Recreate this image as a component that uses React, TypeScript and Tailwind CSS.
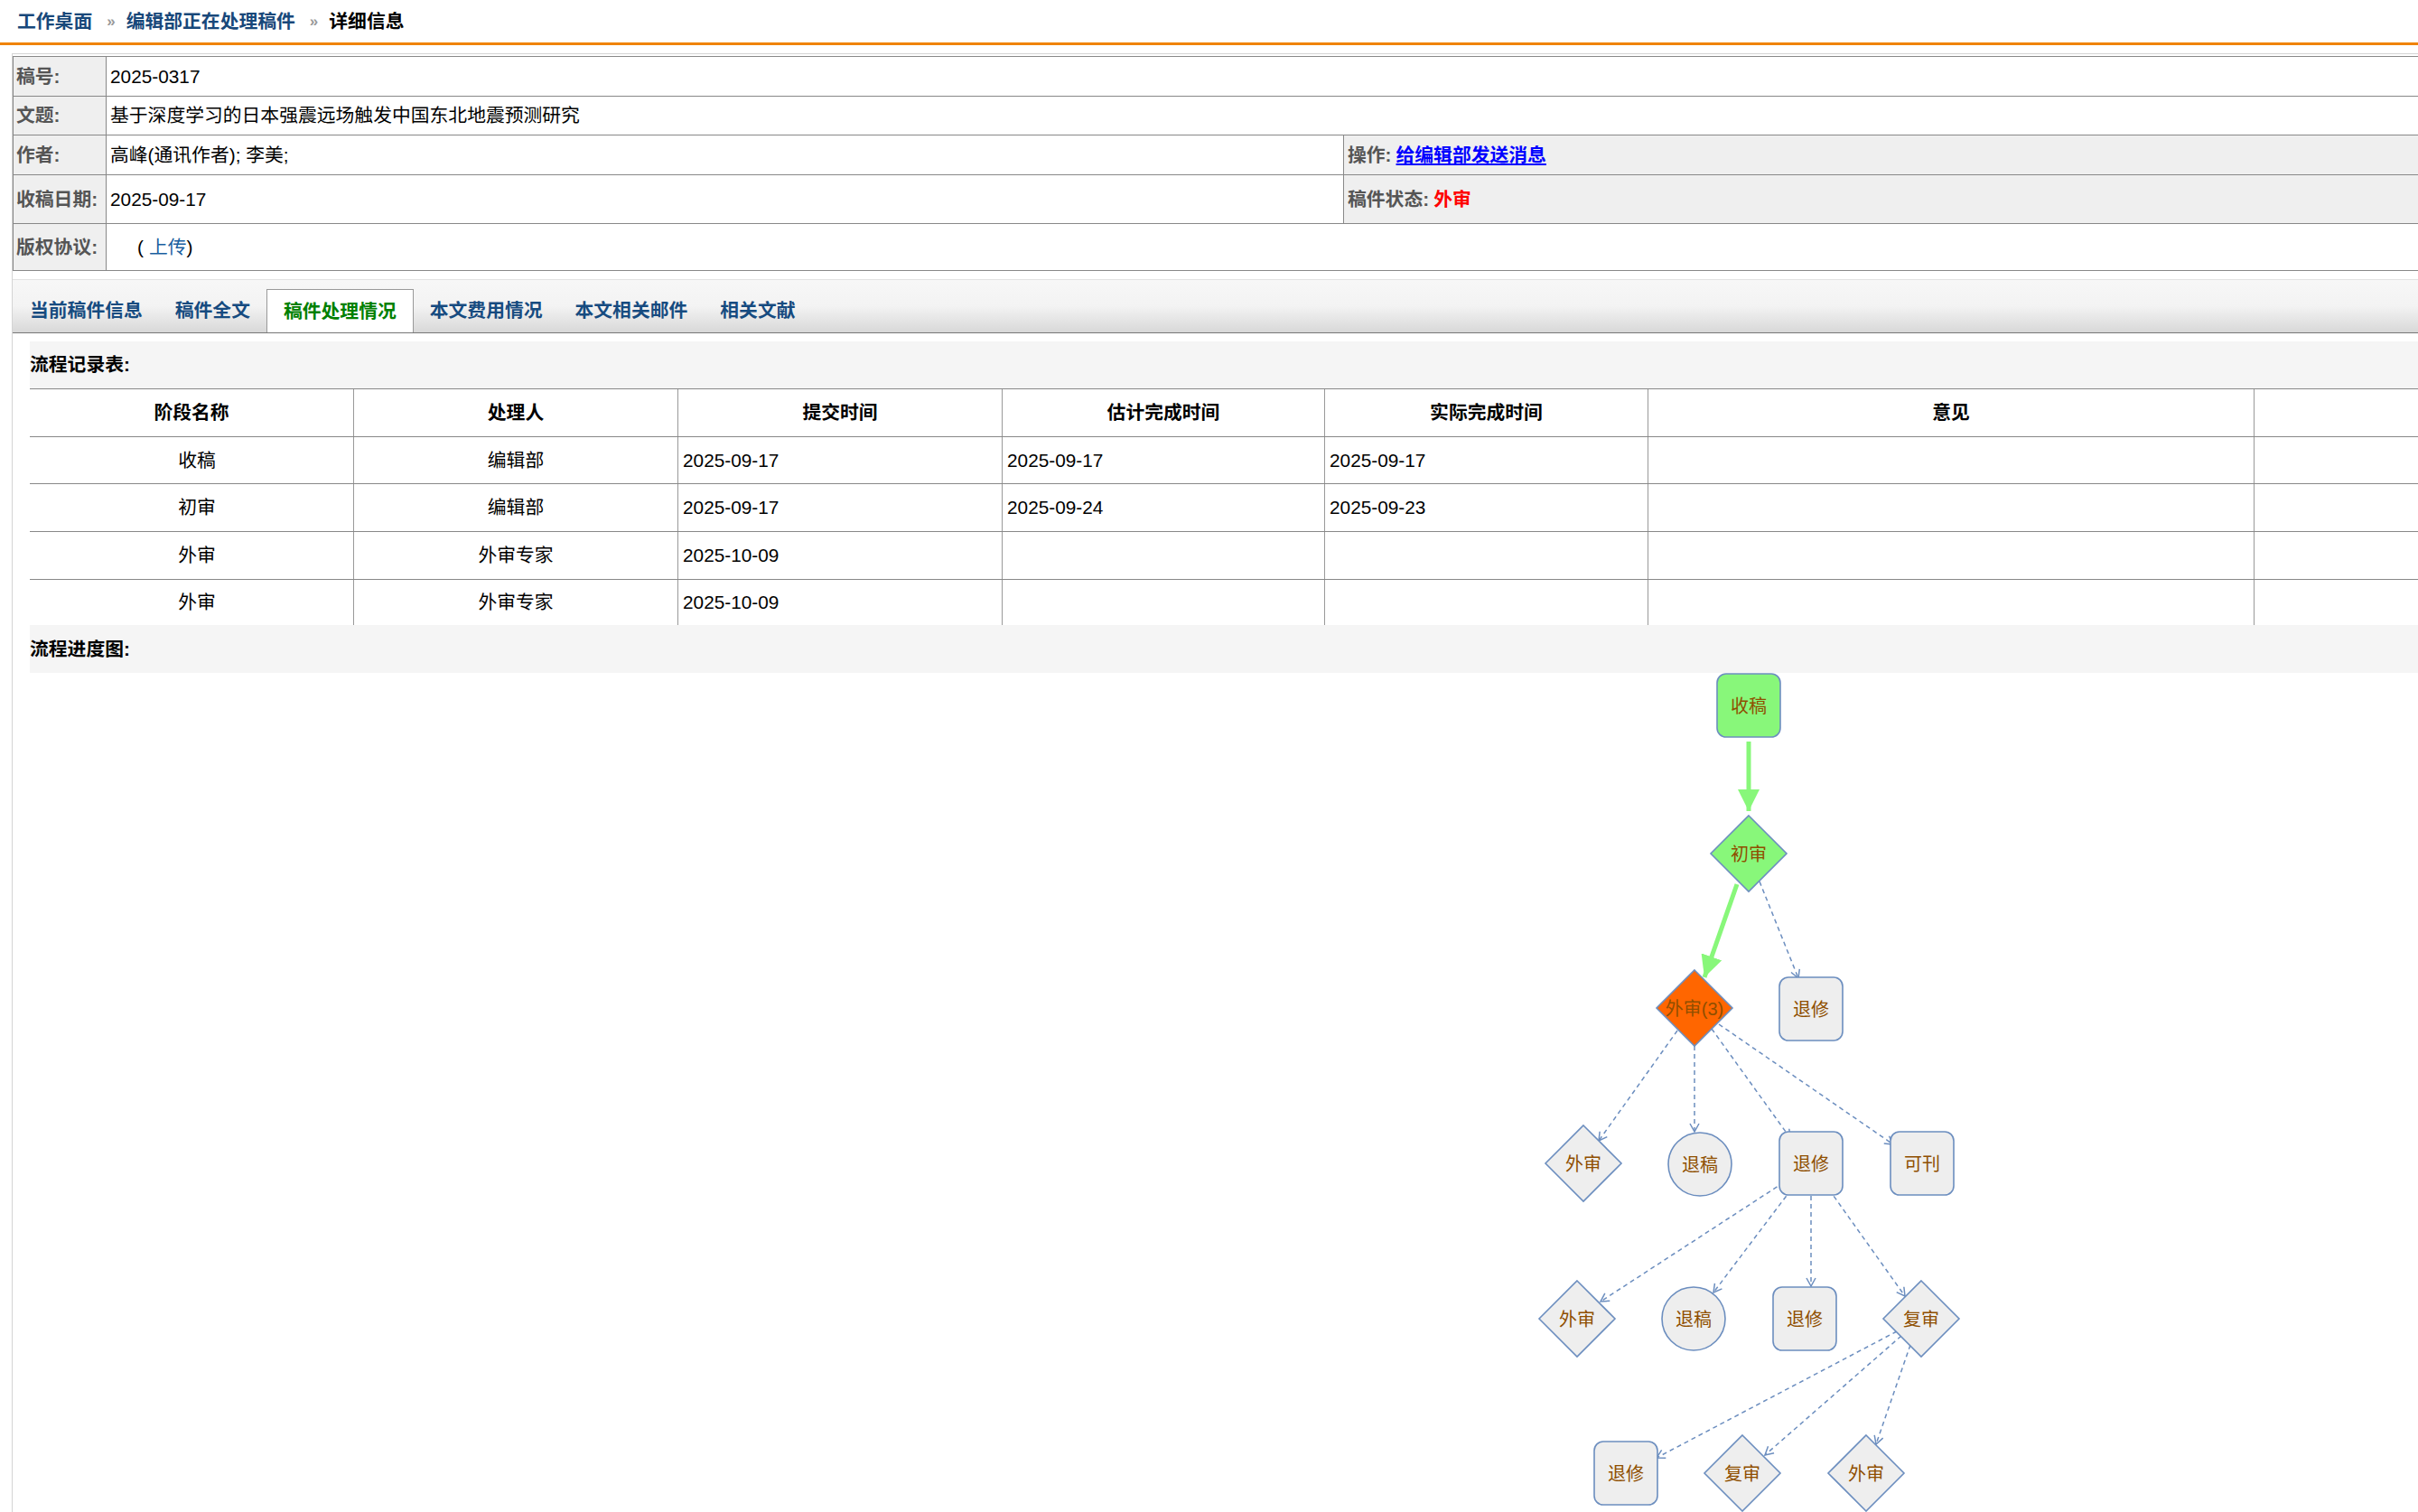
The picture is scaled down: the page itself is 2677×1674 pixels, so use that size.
import React from 'react'

const BLUE = '#6c8ebf'
const NODE_TEXT = '#8f4f00'

type Shape = 'box' | 'diamond' | 'circle'
type FlowNode = { x: number; y: number; shape: Shape; label: string; fill?: string }

// node centres are page coordinates; the svg viewBox is offset to match
const NODES: FlowNode[] = [
  { x: 1936, y: 780, shape: 'box', label: '收稿', fill: '#88f77a' },
  { x: 1936, y: 944, shape: 'diamond', label: '初审', fill: '#88f77a' },
  { x: 1876, y: 1115, shape: 'diamond', label: '外审(3)', fill: '#ff6600' },
  { x: 2005, y: 1116, shape: 'box', label: '退修' },
  { x: 1753, y: 1287, shape: 'diamond', label: '外审' },
  { x: 1882, y: 1288, shape: 'circle', label: '退稿' },
  { x: 2005, y: 1287, shape: 'box', label: '退修' },
  { x: 2128, y: 1287, shape: 'box', label: '可刊' },
  { x: 1746, y: 1459, shape: 'diamond', label: '外审' },
  { x: 1875, y: 1459, shape: 'circle', label: '退稿' },
  { x: 1998, y: 1459, shape: 'box', label: '退修' },
  { x: 2127, y: 1459, shape: 'diamond', label: '复审' },
  { x: 1800, y: 1630, shape: 'box', label: '退修' },
  { x: 1929, y: 1630, shape: 'diamond', label: '复审' },
  { x: 2066, y: 1630, shape: 'diamond', label: '外审' },
]

const DONE_EDGES: [number, number, number, number][] = [
  [1936, 820, 1936, 897],
  [1923, 978, 1887, 1081],
]

const EDGES: [number, number, number, number][] = [
  [1948, 975, 1991, 1082],
  [1857, 1140, 1770, 1262],
  [1876, 1157, 1876, 1252],
  [1895, 1138, 1982, 1259],
  [1903, 1133, 2096, 1266],
  [1975, 1308, 1772, 1440],
  [1983, 1316, 1897, 1430],
  [2005, 1323, 2005, 1423],
  [2025, 1316, 2109, 1434],
  [2100, 1473, 1834, 1613],
  [2105, 1478, 1954, 1610],
  [2115, 1488, 2077, 1598],
]

function NodeShape({ n }: { n: FlowNode }) {
  const fill = n.fill ?? '#eeeeee'
  return (
    <g>
      {n.shape === 'box' && (
        <rect x={n.x - 35} y={n.y - 35} width={70} height={70} rx={10} fill={fill} stroke={BLUE} strokeWidth={1.6} />
      )}
      {n.shape === 'diamond' && (
        <polygon
          points={`${n.x},${n.y - 42} ${n.x + 42},${n.y} ${n.x},${n.y + 42} ${n.x - 42},${n.y}`}
          fill={fill}
          stroke={BLUE}
          strokeWidth={1.6}
        />
      )}
      {n.shape === 'circle' && <ellipse cx={n.x} cy={n.y} rx={35} ry={35} fill={fill} stroke={BLUE} strokeWidth={1.6} />}
      <text
        x={n.x}
        y={n.y + 1}
        textAnchor="middle"
        dominantBaseline="central"
        fontSize={20}
        fill={NODE_TEXT}
        fontFamily="'Liberation Sans','Noto Sans CJK SC',sans-serif"
      >
        {n.label}
      </text>
    </g>
  )
}

function FlowChart() {
  return (
    <svg width={2644} height={930} viewBox="33 744 2644 930" className="block">
      <defs>
        <marker id="done" markerUnits="userSpaceOnUse" markerWidth={24} markerHeight={24} refX={24} refY={12} orient="auto">
          <path d="M0,0 L24,12 L0,24 z" fill="#88f77a" />
        </marker>
        <marker id="open" markerUnits="userSpaceOnUse" markerWidth={12} markerHeight={12} refX={10} refY={6} orient="auto">
          <path d="M1,1 L10,6 L1,11" fill="none" stroke={BLUE} strokeWidth={1.5} />
        </marker>
      </defs>
      {DONE_EDGES.map(([x1, y1, x2, y2], i) => (
        <line key={i} x1={x1} y1={y1} x2={x2} y2={y2} stroke="#88f77a" strokeWidth={5} markerEnd="url(#done)" />
      ))}
      {EDGES.map(([x1, y1, x2, y2], i) => (
        <line
          key={i}
          x1={x1}
          y1={y1}
          x2={x2}
          y2={y2}
          stroke={BLUE}
          strokeWidth={1.5}
          strokeDasharray="5 4"
          markerEnd="url(#open)"
        />
      ))}
      {NODES.map((n, i) => (
        <NodeShape key={i} n={n} />
      ))}
    </svg>
  )
}

function InfoRow({ label, h, children }: { label: string; h: string; children: React.ReactNode }) {
  return (
    <div className={`flex border-b border-[#888] ${h}`}>
      <div className="w-[103px] shrink-0 bg-[#efefef] border-r border-[#888] pl-[3px] flex items-center font-bold text-[#555]">
        {label}
      </div>
      {children}
    </div>
  )
}

const TABS = ['当前稿件信息', '稿件全文', '稿件处理情况', '本文费用情况', '本文相关邮件', '相关文献']

const COLS = ['w-[359px]', 'w-[359px]', 'w-[359px]', 'w-[357px]', 'w-[358px]', 'w-[671px]', 'w-[400px]']
const HEADERS = ['阶段名称', '处理人', '提交时间', '估计完成时间', '实际完成时间', '意见', '']
const ROWS = [
  ['收稿', '编辑部', '2025-09-17', '2025-09-17', '2025-09-17'],
  ['初审', '编辑部', '2025-09-17', '2025-09-24', '2025-09-23'],
  ['外审', '外审专家', '2025-10-09', '', ''],
  ['外审', '外审专家', '2025-10-09', '', ''],
]
const ROW_H = ['h-[52px] border-b border-[#888]', 'h-[53px] border-b border-[#888]', 'h-[53px] border-b border-[#888]', 'h-[50px]']
const CELL_ALIGN = ['justify-center pl-[12px]', 'justify-center', 'pl-[5px]', 'pl-[5px]', 'pl-[5px]', 'pl-[5px]', 'pl-[5px]']

export default function App() {
  return (
    <div className="w-[2677px] h-[1674px] overflow-hidden bg-white text-black text-[20.8px] font-['Liberation_Sans','Noto_Sans_CJK_SC',sans-serif]">
      {/* breadcrumb */}
      <div className="h-[50px] border-b-[3px] border-[#f08300] pl-[19px] flex items-center font-bold">
        <span className="text-[#18487a]">工作桌面</span>
        <span className="text-[17px] text-[#999] ml-[16px] mr-[12px]">»</span>
        <span className="text-[#18487a]">编辑部正在处理稿件</span>
        <span className="text-[17px] text-[#999] ml-[16px] mr-[12px]">»</span>
        <span className="text-black">详细信息</span>
      </div>

      <div className="ml-[13px] mt-[9px] w-[2780px] border-l border-t border-[#d4d4d4] pt-[2px]">
        {/* manuscript info */}
        <div className="border-t border-l border-[#888]">
          <InfoRow label="稿号:" h="h-[44px]">
            <div className="flex-1 pl-[4px] flex items-center">2025-0317</div>
          </InfoRow>
          <InfoRow label="文题:" h="h-[43px]">
            <div className="flex-1 pl-[4px] flex items-center">基于深度学习的日本强震远场触发中国东北地震预测研究</div>
          </InfoRow>
          <InfoRow label="作者:" h="h-[44px]">
            <div className="w-[1369px] shrink-0 pl-[4px] flex items-center">高峰(通讯作者); 李美;</div>
            <div className="flex-1 bg-[#efefef] border-l border-[#888] pl-[4px] flex items-center font-bold text-[#555]">
              操作:
              <a href="#" className="ml-[5px] text-[#0000ff] underline">
                给编辑部发送消息
              </a>
            </div>
          </InfoRow>
          <InfoRow label="收稿日期:" h="h-[54px]">
            <div className="w-[1369px] shrink-0 pl-[4px] flex items-center">2025-09-17</div>
            <div className="flex-1 bg-[#efefef] border-l border-[#888] pl-[4px] flex items-center font-bold text-[#555]">
              稿件状态:<span className="ml-[5px] text-[#ff0000]">外审</span>
            </div>
          </InfoRow>
          <InfoRow label="版权协议:" h="h-[52px]">
            <div className="flex-1 pl-[34px] flex items-center">
              (<span className="ml-[6px] text-[#1a5fa0]">上传</span>)
            </div>
          </InfoRow>
        </div>

        {/* tabs */}
        <div className="mt-[9px] h-[60px] border-t border-b border-t-[#e2e2e2] border-b-[#777] bg-gradient-to-b from-[#f7f7f7] via-[#f3f3f3] to-[#d8d8d8] flex items-end pl-[1px]">
          {TABS.map((t) =>
            t === '稿件处理情况' ? (
              <div key={t} className="h-[48px] px-[18px] flex items-center bg-white border border-b-0 border-[#999] font-bold text-[#008000]">
                {t}
              </div>
            ) : (
              <div key={t} className="h-[48px] px-[18px] flex items-center font-bold text-[#164b80]">
                {t}
              </div>
            )
          )}
        </div>

        {/* tab content */}
        <div className="pl-[19px] pt-[9px]">
          <div className="h-[52px] bg-[#f5f5f5] flex items-center font-bold">流程记录表:</div>
          <div className="border-t border-[#888]">
            <div className="flex h-[53px] border-b border-[#888]">
              {HEADERS.map((h, i) => (
                <div key={i} className={`${COLS[i]} shrink-0 border-r border-[#999] flex items-center justify-center font-bold`}>
                  {h}
                </div>
              ))}
            </div>
            {ROWS.map((r, ri) => (
              <div key={ri} className={`flex ${ROW_H[ri]}`}>
                {COLS.map((c, i) => (
                  <div key={i} className={`${c} shrink-0 border-r border-[#999] flex items-center ${CELL_ALIGN[i]}`}>
                    {r[i] ?? ''}
                  </div>
                ))}
              </div>
            ))}
          </div>
          <div className="h-[53px] bg-[#f5f5f5] flex items-center font-bold">流程进度图:</div>
          <FlowChart />
        </div>
      </div>
    </div>
  )
}
